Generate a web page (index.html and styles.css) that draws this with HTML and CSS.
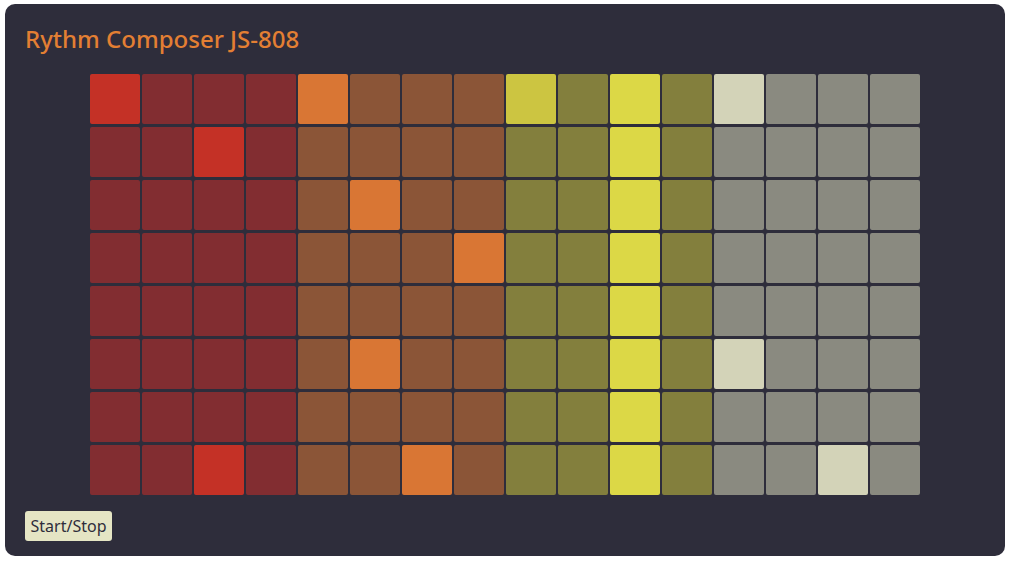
FILE: index.html
```html
<!DOCTYPE html>
<html>
<head>
<meta charset="utf-8">
<title>Rythm Composer JS-808</title>
<link rel="stylesheet" href="styles.css">
</head>
<body>
<div class="panel">
  <h1 class="title">Rythm Composer JS-808</h1>
  <div class="grid">
    <div class="c r on"></div><div class="c r"></div><div class="c r"></div><div class="c r"></div><div class="c o on"></div><div class="c o"></div><div class="c o"></div><div class="c o"></div><div class="c y on"></div><div class="c y"></div><div class="c y play"></div><div class="c y"></div><div class="c g on"></div><div class="c g"></div><div class="c g"></div><div class="c g"></div>
    <div class="c r"></div><div class="c r"></div><div class="c r on"></div><div class="c r"></div><div class="c o"></div><div class="c o"></div><div class="c o"></div><div class="c o"></div><div class="c y"></div><div class="c y"></div><div class="c y play"></div><div class="c y"></div><div class="c g"></div><div class="c g"></div><div class="c g"></div><div class="c g"></div>
    <div class="c r"></div><div class="c r"></div><div class="c r"></div><div class="c r"></div><div class="c o"></div><div class="c o on"></div><div class="c o"></div><div class="c o"></div><div class="c y"></div><div class="c y"></div><div class="c y play"></div><div class="c y"></div><div class="c g"></div><div class="c g"></div><div class="c g"></div><div class="c g"></div>
    <div class="c r"></div><div class="c r"></div><div class="c r"></div><div class="c r"></div><div class="c o"></div><div class="c o"></div><div class="c o"></div><div class="c o on"></div><div class="c y"></div><div class="c y"></div><div class="c y play"></div><div class="c y"></div><div class="c g"></div><div class="c g"></div><div class="c g"></div><div class="c g"></div>
    <div class="c r"></div><div class="c r"></div><div class="c r"></div><div class="c r"></div><div class="c o"></div><div class="c o"></div><div class="c o"></div><div class="c o"></div><div class="c y"></div><div class="c y"></div><div class="c y play"></div><div class="c y"></div><div class="c g"></div><div class="c g"></div><div class="c g"></div><div class="c g"></div>
    <div class="c r"></div><div class="c r"></div><div class="c r"></div><div class="c r"></div><div class="c o"></div><div class="c o on"></div><div class="c o"></div><div class="c o"></div><div class="c y"></div><div class="c y"></div><div class="c y play"></div><div class="c y"></div><div class="c g on"></div><div class="c g"></div><div class="c g"></div><div class="c g"></div>
    <div class="c r"></div><div class="c r"></div><div class="c r"></div><div class="c r"></div><div class="c o"></div><div class="c o"></div><div class="c o"></div><div class="c o"></div><div class="c y"></div><div class="c y"></div><div class="c y play"></div><div class="c y"></div><div class="c g"></div><div class="c g"></div><div class="c g"></div><div class="c g"></div>
    <div class="c r"></div><div class="c r"></div><div class="c r on"></div><div class="c r"></div><div class="c o"></div><div class="c o"></div><div class="c o on"></div><div class="c o"></div><div class="c y"></div><div class="c y"></div><div class="c y play"></div><div class="c y"></div><div class="c g"></div><div class="c g"></div><div class="c g on"></div><div class="c g"></div>
  </div>
  <button class="btn">Start/Stop</button>
</div>
</body>
</html>
```
FILE: styles.css
```css
html, body {
  margin: 0;
  padding: 0;
  background: #ffffff;
}
.panel {
  box-sizing: border-box;
  width: 1000px;
  height: 552px;
  margin: 4px 0 0 5px;
  background: #2e2d3b;
  border-radius: 10px;
  padding: 20px 20px 0 20px;
  display: flex;
  flex-direction: column;
  font-family: "Noto Sans", "DejaVu Sans", sans-serif;
}
.title {
  margin: 0;
  font-size: 24px;
  font-weight: 500;
  line-height: 30px;
  color: #e37f33;
  letter-spacing: 0;
}
.grid {
  align-self: center;
  margin-top: 20px;
  display: grid;
  grid-template-columns: repeat(16, 50px);
  grid-auto-rows: 50px;
  column-gap: 2px;
  row-gap: 3px;
}
.c {
  border-radius: 2px;
}
.r { background: #822d31; }
.r.on { background: #c43126; }
.o { background: #8b5537; }
.o.on { background: #d97634; }
.y { background: #837f3d; }
.y.on { background: #ccc541; }
.y.play { background: #dcd846; }
.g { background: #8a8a80; }
.g.on { background: #d3d3b8; }
.btn {
  align-self: flex-start;
  margin-top: 16px;
  height: 30px;
  width: 87px;
  padding: 0;
  border: none;
  border-radius: 3px;
  background: #e5e5c4;
  color: #2e2d3b;
  font-family: "Noto Sans", "DejaVu Sans", sans-serif;
  font-size: 16px;
}
```
